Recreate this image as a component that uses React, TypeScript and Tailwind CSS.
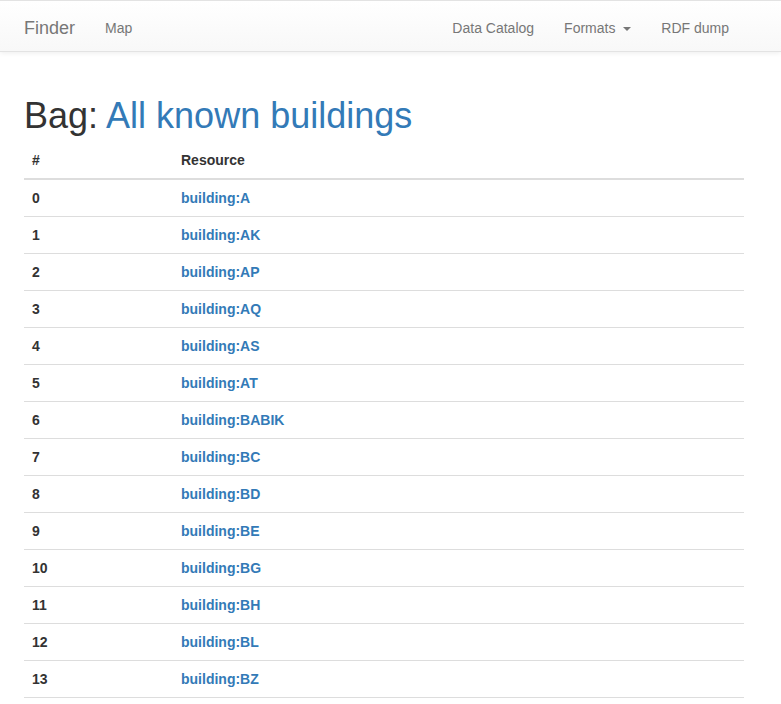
const buildings = ['A', 'AK', 'AP', 'AQ', 'AS', 'AT', 'BABIK', 'BC', 'BD', 'BE', 'BG', 'BH', 'BL', 'BZ'];

function Caret() {
  return (
    <span className="ml-[4px] inline-block h-0 w-0 border-x-[4px] border-t-[4px] border-x-transparent border-t-[#777] align-middle" />
  );
}

export default function App() {
  return (
    <div className="min-h-screen bg-white text-[14px] leading-[20px] text-[#333] font-['Liberation_Sans',Arial,sans-serif]">
      {/* Navbar */}
      <nav className="border-y border-[#e3e3e3] bg-gradient-to-b from-white to-[#f8f8f8] shadow-[0_1px_5px_rgba(0,0,0,0.075)]">
        <div className="ml-[9px] flex w-[750px] px-[15px]">
          <a className="-ml-[15px] block h-[50px] px-[15px] pt-[17px] pb-[13px] text-[18px] leading-[20px] text-[#777]">Finder</a>
          <a className="block px-[15px] pt-[17px] pb-[13px] text-[#777]">Map</a>
          <div className="ml-auto flex">
            <a className="block px-[15px] pt-[17px] pb-[13px] text-[#777]">Data Catalog</a>
            <a className="block px-[15px] pt-[17px] pb-[13px] text-[#777]">
              Formats <Caret />
            </a>
            <a className="block pl-[15px] pr-[15px] pt-[17px] pb-[13px] text-[#777]">RDF dump</a>
          </div>
        </div>
      </nav>

      {/* Content */}
      <main className="ml-[9px] w-[750px] px-[15px]">
        <h1 className="mt-[44px] mb-[6px] text-[36px] leading-[1.1] font-normal">
          Bag: <a className="text-[#337ab7]">All known buildings</a>
        </h1>
        <table className="w-full border-collapse">
          <thead>
            <tr>
              <th className="w-[149px] border-b-2 border-[#ddd] p-[8px] text-left font-bold">#</th>
              <th className="border-b-2 border-[#ddd] p-[8px] text-left font-bold">Resource</th>
            </tr>
          </thead>
          <tbody>
            {buildings.map((b, i) => (
              <tr key={b}>
                <td className="border-b border-[#ddd] p-[8px] font-bold">{i}</td>
                <td className="border-b border-[#ddd] p-[8px] font-bold">
                  <a className="text-[#337ab7]">building:{b}</a>
                </td>
              </tr>
            ))}
          </tbody>
        </table>
      </main>
    </div>
  );
}
